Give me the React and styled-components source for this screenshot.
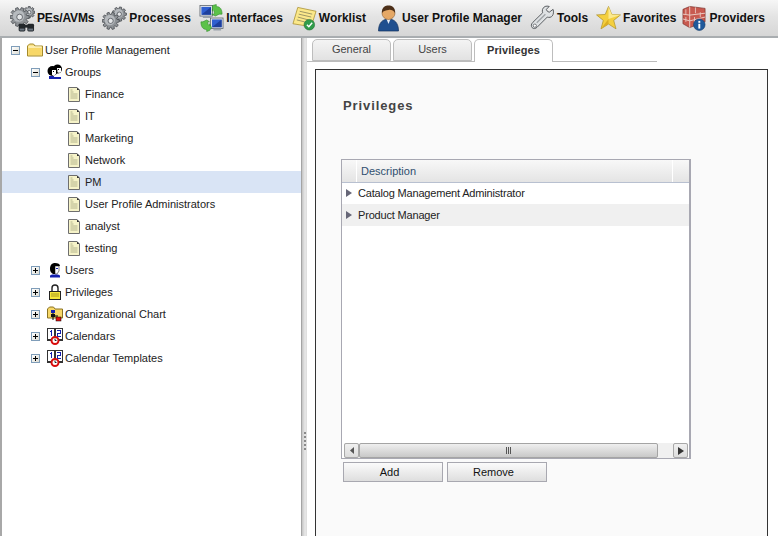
import React from "react";
import styled, { createGlobalStyle } from "styled-components";

const Global = createGlobalStyle`
  html, body { margin: 0; padding: 0; background: #fff; }
  body { font-family: "Liberation Sans", Arial, sans-serif; }
  * { box-sizing: border-box; }
`;

const Page = styled.div`
  width: 778px;
  height: 536px;
  overflow: hidden;
  display: flex;
  flex-direction: column;
`;

const Toolbar = styled.div`
  height: 38px;
  flex: none;
  display: flex;
  align-items: center;
  padding-left: 10px;
  background: linear-gradient(#f6f6f6, #e4e4e4 45%, #d6d6d6);
  border-bottom: 2px solid #a9adb0;
`;

const Tool = styled.div`
  display: flex;
  align-items: center;
  margin-right: ${(p) => p.$after}px;
  font-size: 12px;
  font-weight: bold;
  letter-spacing: ${(p) => p.$track || 0}px;
  color: #111;
  white-space: nowrap;
  svg { flex: none; margin-right: 2px; }
`;

const Main = styled.div`
  flex: 1;
  display: flex;
  min-height: 0;
`;

const TreePanel = styled.div`
  width: 302px;
  flex: none;
  padding-top: 1px;
  background: #fff;
  border-left: 2px solid #a8a8a8;
  border-right: 1px solid #a4a4a4;
`;

const Row = styled.div`
  height: 22px;
  display: flex;
  align-items: center;
  padding-left: ${(p) => p.$indent}px;
  font-size: 11px;
  color: #222;
  background: ${(p) => (p.$selected ? "#d9e4f5" : "transparent")};
`;

const Expander = styled.span`
  width: 9px;
  height: 9px;
  flex: none;
  margin-right: 7px;
  position: relative;
  border: 1px solid #7f9db9;
  background: linear-gradient(135deg, #fff, #dcdcd4);
  &::before {
    content: "";
    position: absolute;
    left: 1px;
    top: 3px;
    width: 5px;
    height: 1px;
    background: #000;
  }
  &::after {
    content: "";
    display: ${(p) => (p.$open ? "none" : "block")};
    position: absolute;
    left: 3px;
    top: 1px;
    width: 1px;
    height: 5px;
    background: #000;
  }
`;

const IconSlot = styled.span`
  width: ${(p) => p.$w}px;
  flex: none;
  display: flex;
  margin-right: ${(p) => p.$gap}px;
`;

const Splitter = styled.div`
  width: 5px;
  flex: none;
  display: flex;
  flex-direction: column;
  align-items: flex-start;
  gap: 2px;
  padding: 394px 0 0 2px;
  background: linear-gradient(90deg, #c4c4c4, #e8e8e8 60%, #dcdcdc);
  span { width: 2px; height: 2px; background: #8a8a8a; }
`;

const Right = styled.div`
  flex: 1;
  min-width: 0;
  display: flex;
  flex-direction: column;
  background: #fff;
  padding-top: 1px;
`;

const TabBar = styled.div`
  width: 350px;
  height: 23px;
  flex: none;
  display: flex;
  gap: 2px;
  padding-left: 5px;
  border-bottom: 1px solid #bcbcbc;
`;

const Tab = styled.div`
  width: 79px;
  height: ${(p) => (p.$active ? 23 : 22)}px;
  padding-bottom: 2px;
  display: flex;
  align-items: center;
  justify-content: center;
  font-size: 11px;
  font-weight: ${(p) => (p.$active ? "bold" : "normal")};
  letter-spacing: ${(p) => (p.$active ? 0.1 : 0)}px;
  color: ${(p) => (p.$active ? "#333" : "#444")};
  border: 1px solid #bdbdbd;
  border-bottom: ${(p) => (p.$active ? "none" : "1px solid #bdbdbd")};
  border-radius: 5px 5px 0 0;
  background: ${(p) => (p.$active ? "#fff" : "linear-gradient(#f4f4f4, #e2e2e2)")};
`;

const Frame = styled.div`
  flex: 1;
  margin: 7px 10px 0 8px;
  padding: 29px 25px 0 27px;
  background: #fafafa;
  border: 1px solid #333;
  border-bottom: none;
`;

const Title = styled.h2`
  margin: 0 0 46px;
  height: 14px;
  line-height: 14px;
  font-size: 13px;
  font-weight: bold;
  letter-spacing: 0.9px;
  color: #444;
`;

const Grid = styled.div`
  width: 350px;
  height: 300px;
  margin-left: -2px;
  display: flex;
  flex-direction: column;
  background: #fff;
  border: 1px solid #a8a8b2;
  border-width: 1px 2px 1px 1px;
`;

const GridHead = styled.div`
  height: 23px;
  flex: none;
  display: flex;
  font-size: 11px;
  color: #2f4f6f;
  background: linear-gradient(#f8f8f8, #e4e4e4);
  border-bottom: 1px solid #b8c0d0;
`;

const HeadCell = styled.div`
  flex: ${(p) => (p.$grow ? 1 : "none")};
  width: ${(p) => p.$w || 0}px;
  display: flex;
  align-items: center;
  padding-left: ${(p) => (p.$grow ? 4 : 0)}px;
  border-right: ${(p) => (p.$end ? "none" : "1px solid #fff")};
`;

const GridBody = styled.div`
  flex: 1;
`;

const GridRow = styled.div`
  height: 22px;
  display: flex;
  align-items: center;
  padding-left: 4px;
  font-size: 11px;
  letter-spacing: -0.18px;
  color: #222;
  background: ${(p) => (p.$alt ? "#f0f0f0" : "#fff")};
  &:first-child { height: 21px; padding-bottom: 1px; }
  svg { margin-right: 6px; }
`;

const HScroll = styled.div`
  height: 15px;
  flex: none;
  margin: 0 1px 0 2px;
  display: flex;
  background: #f0f0f0;
`;

const ScrollBtn = styled.div`
  width: 15px;
  flex: none;
  display: flex;
  align-items: center;
  justify-content: center;
  border: 1px solid #a8a8a8;
  border-radius: 2px;
  background: linear-gradient(#f0f0f0, #dcdcdc);
`;

const Thumb = styled.div`
  width: 299px;
  flex: none;
  display: flex;
  align-items: center;
  justify-content: center;
  gap: 1px;
  border: 1px solid #a4a4a4;
  border-radius: 2px;
  background: linear-gradient(#efefef, #c8c8c8);
  span { width: 1px; height: 7px; background: #555; }
`;

const ScrollGap = styled.div`
  flex: 1;
`;

const Buttons = styled.div`
  display: flex;
  gap: 4px;
  margin-top: 3px;
`;

const Button = styled.button`
  width: 100px;
  height: 20px;
  padding: 0 7px 0 0;
  font-family: inherit;
  font-size: 11px;
  color: #111;
  border: 1px solid #a8a8b0;
  background: linear-gradient(#fbfbfb, #dedede);
`;

function gearPath(cx, cy, r, teeth) {
  const pts = [];
  const step = (Math.PI * 2) / teeth;
  for (let i = 0; i < teeth; i++) {
    const a = i * step;
    const c = [[-0.32, 0.74], [-0.18, 1], [0.18, 1], [0.32, 0.74]];
    c.forEach(([d, k]) => {
      const t = a + d * step * 1.2;
      pts.push((cx + Math.cos(t) * r * k).toFixed(1) + " " + (cy + Math.sin(t) * r * k).toFixed(1));
    });
  }
  return "M" + pts.join("L") + "Z";
}

const Gear = ({ cx, cy, r, teeth = 9 }) => (
  <g>
    <path d={gearPath(cx, cy, r, teeth)} fill="#8e9296" stroke="#45494e" strokeWidth="0.8" />
    <circle cx={cx - r * 0.1} cy={cy - r * 0.1} r={r * 0.6} fill="#b6babe" />
    <circle cx={cx} cy={cy} r={r * 0.3} fill="#e4e6e8" stroke="#4c5056" strokeWidth="0.8" />
  </g>
);

const PesIcon = () => (
  <svg width="25" height="30" viewBox="0 0 26 30">
    <Gear cx={20} cy={9} r={6} teeth={8} />
    <Gear cx={10} cy={14} r={10} teeth={10} />
    <g fill="#23282c">
      <rect x="9" y="21" width="7" height="8" rx="1.5" />
      <rect x="18" y="21" width="7" height="8" rx="1.5" />
      <rect x="15" y="22" width="4" height="3" />
    </g>
    <rect x="10" y="26" width="5" height="2" fill="#6a7480" />
    <rect x="19" y="26" width="5" height="2" fill="#6a7480" />
  </svg>
);

const ProcessIcon = () => (
  <svg width="25" height="26" viewBox="0 0 26 26">
    <Gear cx={18} cy={9} r={7.5} teeth={9} />
    <Gear cx={9} cy={16} r={9} teeth={10} />
  </svg>
);

const Monitor = ({ x, y }) => (
  <g>
    <rect x={x} y={y} width="13" height="11" fill="#dfe3e8" stroke="#59616b" strokeWidth="0.8" />
    <rect x={x + 1.5} y={y + 1.5} width="10" height="8" fill="#2f5fd0" />
    <path d={`M${x + 1.5} ${y + 9.5}L${x + 11.5} ${y + 1.5}V${y + 9.5}Z`} fill="#1e3f9c" />
    <rect x={x + 3} y={y + 11} width="8" height="2" fill="#9aa2ab" />
  </g>
);

const InterfaceIcon = () => (
  <svg width="25" height="30" viewBox="0 0 26 30">
    <Monitor x={1} y={2} />
    <Monitor x={12} y={15} />
    <path d="M14 2l4-1v2c4 0 6 3 6 8l-3 0 -4 2 -4-2h3c0-3-1-5-2-5v2z" fill="#5cc24a" stroke="#2f8a2a" strokeWidth="0.6" />
    <path d="M11 28l-3 1v-2c-4 0-6-3-6-8h2l4-2 3 2H9c0 2 1 4 2 4v-2l2 4z" fill="#5cc24a" stroke="#2f8a2a" strokeWidth="0.6" />
  </svg>
);

const WorklistIcon = () => (
  <svg width="25" height="26" viewBox="0 0 26 26">
    <path d="M6 2L25 6 20 22 1 19Z" fill="#fbe88a" stroke="#a98f2c" strokeWidth="0.8" />
    <path d="M8 6l13 3M7 9l13 3M6 12l11 3M5 15l8 2" stroke="#8f8a60" strokeWidth="0.9" />
    <circle cx="18" cy="20" r="5.5" fill="#2f9c4a" stroke="#1d6e33" strokeWidth="0.6" />
    <path d="M15.5 20l2 2 3.5-4" fill="none" stroke="#fff" strokeWidth="1.5" />
  </svg>
);

const UserIcon = () => (
  <svg width="23" height="28" viewBox="0 0 22 28">
    <path d="M1 27c0-8 4-12 10-12s10 4 10 12z" fill="#1f4f8f" stroke="#12305c" strokeWidth="0.7" />
    <path d="M9 15l2 5 2-5z" fill="#e8eef5" />
    <circle cx="11" cy="9" r="6.5" fill="#e5a866" stroke="#8a5a2c" strokeWidth="0.6" />
    <path d="M4.5 9C4 3 8 1.5 11 1.5S18 3 17.5 9C16 6 13 5.5 11 6 9 6.5 6 6.5 4.5 9Z" fill="#4c2f18" />
  </svg>
);

const WrenchIcon = () => (
  <svg width="25" height="26" viewBox="0 0 26 26">
    <path d="M24 4l-4 3-2-1-1-2 3-3c-3-1-6 0-7 3-.4 1.400-.2 2.500.2 3.500L3 17.500c-2 2-2 4-.8 5.500 1.500 1.500 3.500 1.300 5.300-.5L18 12c2 .8 4 .3 5.200-1.200C24.500 9 24.800 6.500 24 4z" fill="#dfe2e4" stroke="#55595e" strokeWidth="1" />
    <circle cx="5" cy="21" r="1.700" fill="#fff" stroke="#55595e" strokeWidth="0.8" />
    <path d="M7 18L16 9" stroke="#a0a4a8" strokeWidth="1.500" />
  </svg>
);

const StarIcon = () => (
  <svg width="25" height="26" viewBox="0 0 26 26">
    <path d="M13 1l3.400 8.300 9 .5-7 5.700 2.400 8.800L13 19.300 5.200 24.300l2.400-8.800-7-5.700 9-.5z" fill="#f4cf3e" stroke="#b2962e" strokeWidth="0.8" />
    <path d="M13 1l3.400 8.300 9 .5L13 14z" fill="#fbe98e" />
    <path d="M13 14L5.200 24.300 13 19.300z" fill="#dcae24" />
  </svg>
);

const ProviderIcon = () => (
  <svg width="25" height="28" viewBox="0 0 26 28">
    <path d="M1 5L8 2 24 4V18L8 24 1 20Z" fill="#c85a50" stroke="#7a2e28" strokeWidth="0.7" />
    <path d="M8 2V24M1 10l7 1 16-2M1 15l7 2 16-4" stroke="#eacbc4" strokeWidth="1" fill="none" />
    <path d="M4 5v5M4 13v5M14 3v6M19 8v5M13 13v7" stroke="#eacbc4" strokeWidth="0.9" />
    <circle cx="18" cy="21" r="6" fill="#1f5a9c" stroke="#123a68" strokeWidth="0.6" />
    <rect x="17" y="20" width="2" height="5" fill="#fff" />
    <rect x="17" y="17" width="2" height="2" fill="#fff" />
  </svg>
);

const FolderIcon = () => (
  <svg width="16" height="14" viewBox="0 0 16 14">
    <path d="M.5 3V13h15V3H8L6.500 1h-4L.5 3z" fill="#fbe38a" stroke="#a58a2a" />
    <path d="M1.500 5h13v7h-13z" fill="#f7d768" />
    <path d="M1.500 4h13" stroke="#fff8d0" />
  </svg>
);

const GroupIcon = () => (
  <svg width="16" height="16" viewBox="0 0 16 16">
    <path d="M2 15h12v-2H2z" fill="#1420b0" />
    <circle cx="10.500" cy="5" r="4.500" fill="#000" />
    <path d="M10 4h4v4l-2 1-2-1z" fill="#fff" />
    <circle cx="5.500" cy="7" r="5" fill="#000" />
    <path d="M5 6h4v4l-2 2-2-1z" fill="#fff" />
    <rect x="6" y="7" width="1" height="1" fill="#000" />
    <rect x="11" y="5" width="1" height="1" fill="#000" />
    <rect x="2" y="12" width="5" height="3" fill="#1420b0" />
  </svg>
);

const DocIcon = () => (
  <svg width="12" height="15" viewBox="0 0 12 15">
    <path d="M.5.500H9l2.500 2.500V14.500H.5z" fill="#f6f3c8" stroke="#6e6e6e" />
    <path d="M9 .5V3h2.500z" fill="#333" />
    <path d="M2.500 3h2M2.500 5h3M2.500 7h7M2.500 9h7M2.500 11h7" stroke="#b4b48c" />
  </svg>
);

const PersonIcon = () => (
  <svg width="16" height="16" viewBox="0 0 16 16">
    <path d="M3 15.500h10v-2l-2-1H5l-2 1z" fill="#1420b0" />
    <path d="M3 7c0-4 2-6 5-6 3 0 5 1 5 3H8v5l1 3H6C4 11 3 9 3 7z" fill="#000" />
    <path d="M8 4h4v5l-2 3H8z" fill="#fff" stroke="#000" strokeWidth="0.5" />
    <rect x="9" y="6" width="2" height="1" fill="#1420b0" />
  </svg>
);

const LockIcon = () => (
  <svg width="16" height="16" viewBox="0 0 16 16">
    <path d="M5 7V4a3 3 0 016 0v3" fill="none" stroke="#222" strokeWidth="1.400" />
    <rect x="2.500" y="7.500" width="11" height="8" fill="#f6e83c" stroke="#222" />
    <path d="M4 10h8M4 12h8" stroke="#a8981c" />
  </svg>
);

const OrgIcon = () => (
  <svg width="16" height="16" viewBox="0 0 16 16">
    <path d="M.5 3V12h15V3H8L6.500 1h-4z" fill="#f7d768" stroke="#8a7322" />
    <path d="M6 6v8M6 10h5" stroke="#000" />
    <rect x="4" y="4" width="4" height="3" fill="#1420b0" />
    <rect x="4" y="8" width="4" height="3" fill="#111" />
    <rect x="9" y="11" width="5" height="4" fill="#e01010" stroke="#000" strokeWidth="0.5" />
  </svg>
);

const CalendarIcon = () => (
  <svg width="16" height="17" viewBox="0 0 16 17">
    <g shapeRendering="crispEdges">
      <rect x="0" y="0" width="16" height="13" fill="#333" />
      <rect x="1" y="1" width="6" height="10" fill="#fff" />
      <rect x="9" y="1" width="6" height="10" fill="#fff" />
      <path d="M4 2h1v6H4zM3 3h1v1H3zM10 2h4v1h-4zM13 3h1v2h-1zM10 5h4v1h-4zM10 6h1v2h-1zM10 8h4v1h-4z" fill="#1420b0" />
    </g>
    <circle cx="8" cy="12.500" r="3.500" fill="#fff" stroke="#d80c0c" strokeWidth="2" />
    <path d="M8 10.500v2h1.500" stroke="#222" fill="none" />
  </svg>
);

const ArrowRight = ({ c = "#667" }) => (
  <svg width="6" height="8" viewBox="0 0 6 8">
    <path d="M0 0l6 4-6 4z" fill={c} />
  </svg>
);

const ArrowLeft = () => (
  <svg width="4" height="7" viewBox="0 0 4 7">
    <path d="M4 0L0 3.500 4 7z" fill="#555" />
  </svg>
);

const tools = [
  { label: "PEs/AVMs", Icon: PesIcon, after: 8, track: -0.15 },
  { label: "Processes", Icon: ProcessIcon, after: 8, track: 0.2 },
  { label: "Interfaces", Icon: InterfaceIcon, after: 9 },
  { label: "Worklist", Icon: WorklistIcon, after: 11 },
  { label: "User Profile Manager", Icon: UserIcon, after: 8 },
  { label: "Tools", Icon: WrenchIcon, after: 8 },
  { label: "Favorites", Icon: StarIcon, after: 6 },
  { label: "Providers", Icon: ProviderIcon, after: 0 },
];

const groups = ["Finance", "IT", "Marketing", "Network", "PM", "User Profile Administrators", "analyst", "testing"];

const branches = [
  { label: "Users", Icon: PersonIcon },
  { label: "Privileges", Icon: LockIcon },
  { label: "Organizational Chart", Icon: OrgIcon },
  { label: "Calendars", Icon: CalendarIcon },
  { label: "Calendar Templates", Icon: CalendarIcon },
];

export default function App() {
  return (
    <Page>
      <Global />
      <Toolbar>
        {tools.map(({ label, Icon, after, track }) => (
          <Tool key={label} $after={after} $track={track}>
            <Icon />
            {label}
          </Tool>
        ))}
      </Toolbar>
      <Main>
        <TreePanel>
          <Row $indent={9}>
            <Expander $open />
            <IconSlot $w={16} $gap={2}><FolderIcon /></IconSlot>
            User Profile Management
          </Row>
          <Row $indent={29}>
            <Expander $open />
            <IconSlot $w={16} $gap={2}><GroupIcon /></IconSlot>
            Groups
          </Row>
          {groups.map((g) => (
            <Row key={g} $indent={66} $selected={g === "PM"}>
              <IconSlot $w={12} $gap={5}><DocIcon /></IconSlot>
              {g}
            </Row>
          ))}
          {branches.map(({ label, Icon }) => (
            <Row key={label} $indent={29}>
              <Expander />
              <IconSlot $w={16} $gap={2}><Icon /></IconSlot>
              {label}
            </Row>
          ))}
        </TreePanel>
        <Splitter>
          <span /><span /><span /><span /><span />
        </Splitter>
        <Right>
          <TabBar>
            <Tab>General</Tab>
            <Tab>Users</Tab>
            <Tab $active>Privileges</Tab>
          </TabBar>
          <Frame>
            <Title>Privileges</Title>
            <Grid>
              <GridHead>
                <HeadCell $w={15} />
                <HeadCell $grow>Description</HeadCell>
                <HeadCell $w={16} $end />
              </GridHead>
              <GridBody>
                <GridRow><ArrowRight />Catalog Management Administrator</GridRow>
                <GridRow $alt><ArrowRight />Product Manager</GridRow>
              </GridBody>
              <HScroll>
                <ScrollBtn><ArrowLeft /></ScrollBtn>
                <Thumb><span /><span /><span /></Thumb>
                <ScrollGap />
                <ScrollBtn><ArrowRight c="#333" /></ScrollBtn>
              </HScroll>
            </Grid>
            <Buttons>
              <Button>Add</Button>
              <Button>Remove</Button>
            </Buttons>
          </Frame>
        </Right>
      </Main>
    </Page>
  );
}
